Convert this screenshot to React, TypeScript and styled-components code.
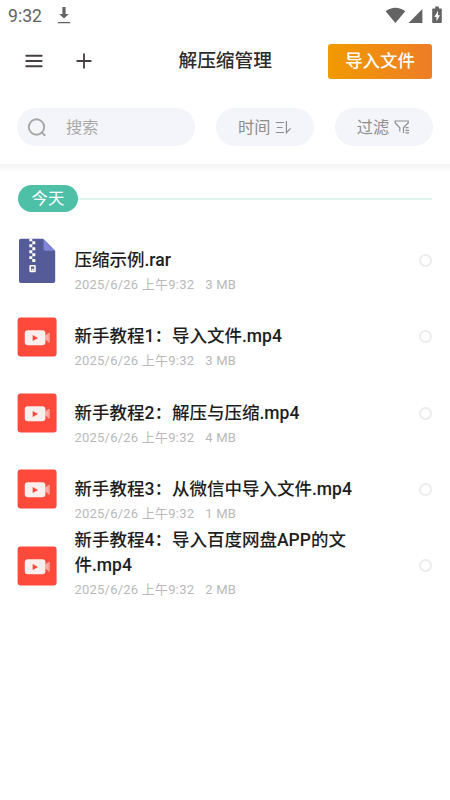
import React from 'react';
import styled, { createGlobalStyle } from 'styled-components';

const GlobalStyle = createGlobalStyle`
  * { box-sizing: border-box; }
  body {
    margin: 0;
    background: #fff;
    font-family: Roboto, "Noto Sans CJK SC", sans-serif;
  }
`;

const Screen = styled.div`
  width: 450px;
  height: 800px;
  background: #fff;
  overflow: hidden;
`;

const StatusBar = styled.div`
  display: flex;
  align-items: center;
  height: 30px;
  padding: 0 7px 0 8px;
  color: #636363;
  font-size: 17.6px;
`;

const Clock = styled.span`
  width: 49px;
  line-height: 30px;
  padding-top: 1px;
`;

const StatusIcons = styled.div`
  display: flex;
  align-items: center;
  margin-left: auto;
`;

const Header = styled.header`
  display: grid;
  grid-template-columns: 22px 49px 1fr 104px;
  align-items: center;
  height: 62px;
  padding: 0 18px 0 21px;
`;

const IconButton = styled.div`
  display: flex;
  justify-content: flex-end;
`;

const Title = styled.h1`
  margin: 0 0 0 86.5px;
  font-size: 18.7px;
  font-weight: 500;
  line-height: 28px;
  color: #2c2c2c;
  white-space: nowrap;
`;

const ImportButton = styled.div`
  height: 35px;
  border-radius: 3px;
  background: linear-gradient(90deg, #f19a02, #ee7d26);
  color: #fff;
  font-size: 17.4px;
  font-weight: 500;
  line-height: 35px;
  text-align: center;
`;

const Filters = styled.div`
  display: grid;
  grid-template-columns: 178px 98px 98px;
  justify-content: space-between;
  height: 72px;
  padding: 16px 17.5px 0 17px;
`;

const Pill = styled.div<{ $search?: boolean }>`
  display: flex;
  align-items: center;
  justify-content: ${p => (p.$search ? 'flex-start' : 'center')};
  gap: ${p => (p.$search ? '19px' : '5px')};
  padding-left: ${p => (p.$search ? '10px' : '1px')};
  height: 38px;
  border-radius: 19px;
  background: #f4f5fa;
  color: ${p => (p.$search ? '#a9a9a9' : '#8d8d8d')};
  font-size: 16.2px;
  line-height: 38px;
`;

const PillText = styled.span`
  padding-top: 1px;
`;

const Shade = styled.div`
  height: 8px;
  background: linear-gradient(#f3f3f3, #fff);
`;

const DayHeader = styled.div`
  display: flex;
  align-items: center;
  padding: 13px 18px 0 18px;
`;

const DayLabel = styled.div`
  width: 60px;
  height: 27px;
  border-radius: 13.5px;
  background: #4fc0a8;
  color: #fff;
  font-size: 16.4px;
  line-height: 28px;
  text-align: center;
`;

const DayLine = styled.div`
  flex: 1;
  height: 2px;
  background: #e2f4f0;
`;

const List = styled.div`
  padding: 10.6px 18px 0 17px;
`;

const Row = styled.div`
  display: grid;
  grid-template-columns: 57.5px 1fr 13px;
  align-items: center;
  height: 76.25px;
`;

const Info = styled.div`
  display: flex;
  flex-direction: column;
  justify-content: flex-end;
  height: 76.25px;
  padding-bottom: 3.7px;
`;

const FileName = styled.div`
  width: 290px;
  margin-bottom: 1.6px;
  color: #1e1e1e;
  font-size: 17.5px;
  font-weight: 500;
  line-height: 25.4px;
`;

const Meta = styled.div`
  display: flex;
  gap: 11px;
  color: #b9b9b9;
  font-size: 13px;
  letter-spacing: 0.22px;
  line-height: 20px;
`;

const Radio = styled.div`
  width: 13px;
  height: 13px;
  border: 2px solid #ececec;
  border-radius: 50%;
`;

const DownloadIcon = () => (
  <svg width="14" height="18" viewBox="0 0 14 18" fill="#636363">
    <path d="M5.4 1h3.2v7h3.1L7 12.6 2.3 8h3.1zM.8 15.9h12.4v1.4H.8z" />
  </svg>
);

const SignalIcons = () => (
  <svg width="58" height="20" viewBox="0 0 58 20" fill="#636363">
    <path d="M.6 6.3C6 1.4 14.8 1.4 20.2 6.3L10.4 18z" />
    <path d="M37.4 4v14H23.6z" />
    <path d="M50.2 1.6h3.6v1.8h2c.6 0 1 .4 1 1V17c0 .6-.4 1-1 1h-7.600c-.6 0-1-.4-1-1V4.400c0-.6.4-1 1-1h2z" />
    <path d="M53 5.800L49.300 12h2.200v4.200l3.500-6h-2z" fill="#fff" />
  </svg>
);

const MenuIcon = () => (
  <svg width="18" height="14" viewBox="0 0 18 14" stroke="#443f41" strokeWidth="2" strokeLinecap="round">
    <path d="M1.300 1.700h15.300M1.300 7h15.300M1.300 12.300h15.300" />
  </svg>
);

const PlusIcon = () => (
  <svg width="16" height="16" viewBox="0 0 16 16" stroke="#443f41" strokeWidth="1.8" strokeLinecap="round">
    <path d="M8 1.200v13.600M1.200 8h13.600" />
  </svg>
);

const SearchIcon = () => (
  <svg width="20" height="20" viewBox="0 0 20 20" fill="none" stroke="#a6a6a6" strokeWidth="1.900" strokeLinecap="round">
    <circle cx="9.500" cy="10" r="7.700" />
    <path d="M15 15.600l2.700 2.600" />
  </svg>
);

const SortIcon = () => (
  <svg width="17" height="16" viewBox="0 0 17 16" fill="none" stroke="#8d8d8d" strokeWidth="1.200">
    <path d="M.8 3.500h8.200M1.800 8.500h5.700M.8 13.500h8.200M11.400 2v11.700l4.200-4.400" />
  </svg>
);

const FilterIcon = () => (
  <svg width="17" height="16" viewBox="0 0 17 16" fill="none" stroke="#8d8d8d" strokeWidth="1.200">
    <path d="M5.800 12.500V8.800L1.200 4V2h13v2L9.500 8.500v5.500M11.500 8.700h3M11.500 11.300h3.500M11.500 13.900h3.500" />
  </svg>
);

const ArchiveIcon = () => (
  <svg width="40" height="46" viewBox="0 0 40 46">
    <path d="M4 .8h22l12.200 12V43a2 2 0 0 1-2 2H4a2 2 0 0 1-2-2V2.800a2 2 0 0 1 2-2z" fill="#555b98" />
    <path d="M26.500.8l11.700 12H28.500a2 2 0 0 1-2-2z" fill="#8187d8" />
    <path d="M12.300.8h3v2.400h-3zM15.300 3.200h3v3h-3zM12.300 6.200h3v3h-3zM15.300 9.200h3v3h-3zM12.300 12.200h3v3h-3zM15.300 15.200h3v3h-3zM12.300 18.200h3v2.800h-3zM15.300 21h3v3h-3z" fill="#fff" />
    <rect x="13.200" y="27.700" width="4.800" height="5.800" rx=".5" fill="#555b98" stroke="#fff" strokeWidth="1.600" />
    <path d="M14.500 30.700h2.200v2h-2.200z" fill="#fff" />
  </svg>
);

const VideoIcon = () => (
  <svg width="40" height="40" viewBox="0 0 40 40">
    <rect x=".6" y=".5" width="39" height="39" rx="3" fill="#ff493b" />
    <path d="M28.500 18.300l4-2.500v9.500l-4-2.500z" fill="#ffb2aa" />
    <path d="M30.700 16h1.900v9.600h-1.900z" fill="#ff9b92" />
    <rect x="7.800" y="13.300" width="20.600" height="15" rx="3" fill="#fceeed" />
    <path d="M15.700 17.900l5.300 3-5.300 3z" fill="#f4483c" />
  </svg>
);

const files = [
  { name: '压缩示例.rar', size: '3 MB', archive: true },
  { name: '新手教程1：导入文件.mp4', size: '3 MB' },
  { name: '新手教程2：解压与压缩.mp4', size: '4 MB' },
  { name: '新手教程3：从微信中导入文件.mp4', size: '1 MB' },
  { name: '新手教程4：导入百度网盘APP的文件.mp4', size: '2 MB' },
];

export default function App() {
  return (
    <Screen lang="zh-CN">
      <GlobalStyle />
      <StatusBar>
        <Clock>9:32</Clock>
        <DownloadIcon />
        <StatusIcons><SignalIcons /></StatusIcons>
      </StatusBar>
      <Header>
        <IconButton><MenuIcon /></IconButton>
        <IconButton><PlusIcon /></IconButton>
        <Title>解压缩管理</Title>
        <ImportButton>导入文件</ImportButton>
      </Header>
      <Filters>
        <Pill $search><SearchIcon /><PillText>搜索</PillText></Pill>
        <Pill><PillText>时间</PillText><SortIcon /></Pill>
        <Pill><PillText>过滤</PillText><FilterIcon /></Pill>
      </Filters>
      <Shade />
      <DayHeader>
        <DayLabel>今天</DayLabel>
        <DayLine />
      </DayHeader>
      <List>
        {files.map(file => (
          <Row key={file.name}>
            {file.archive ? <ArchiveIcon /> : <VideoIcon />}
            <Info>
              <FileName>{file.name}</FileName>
              <Meta><span>2025/6/26 上午9:32</span><span>{file.size}</span></Meta>
            </Info>
            <Radio />
          </Row>
        ))}
      </List>
    </Screen>
  );
}
